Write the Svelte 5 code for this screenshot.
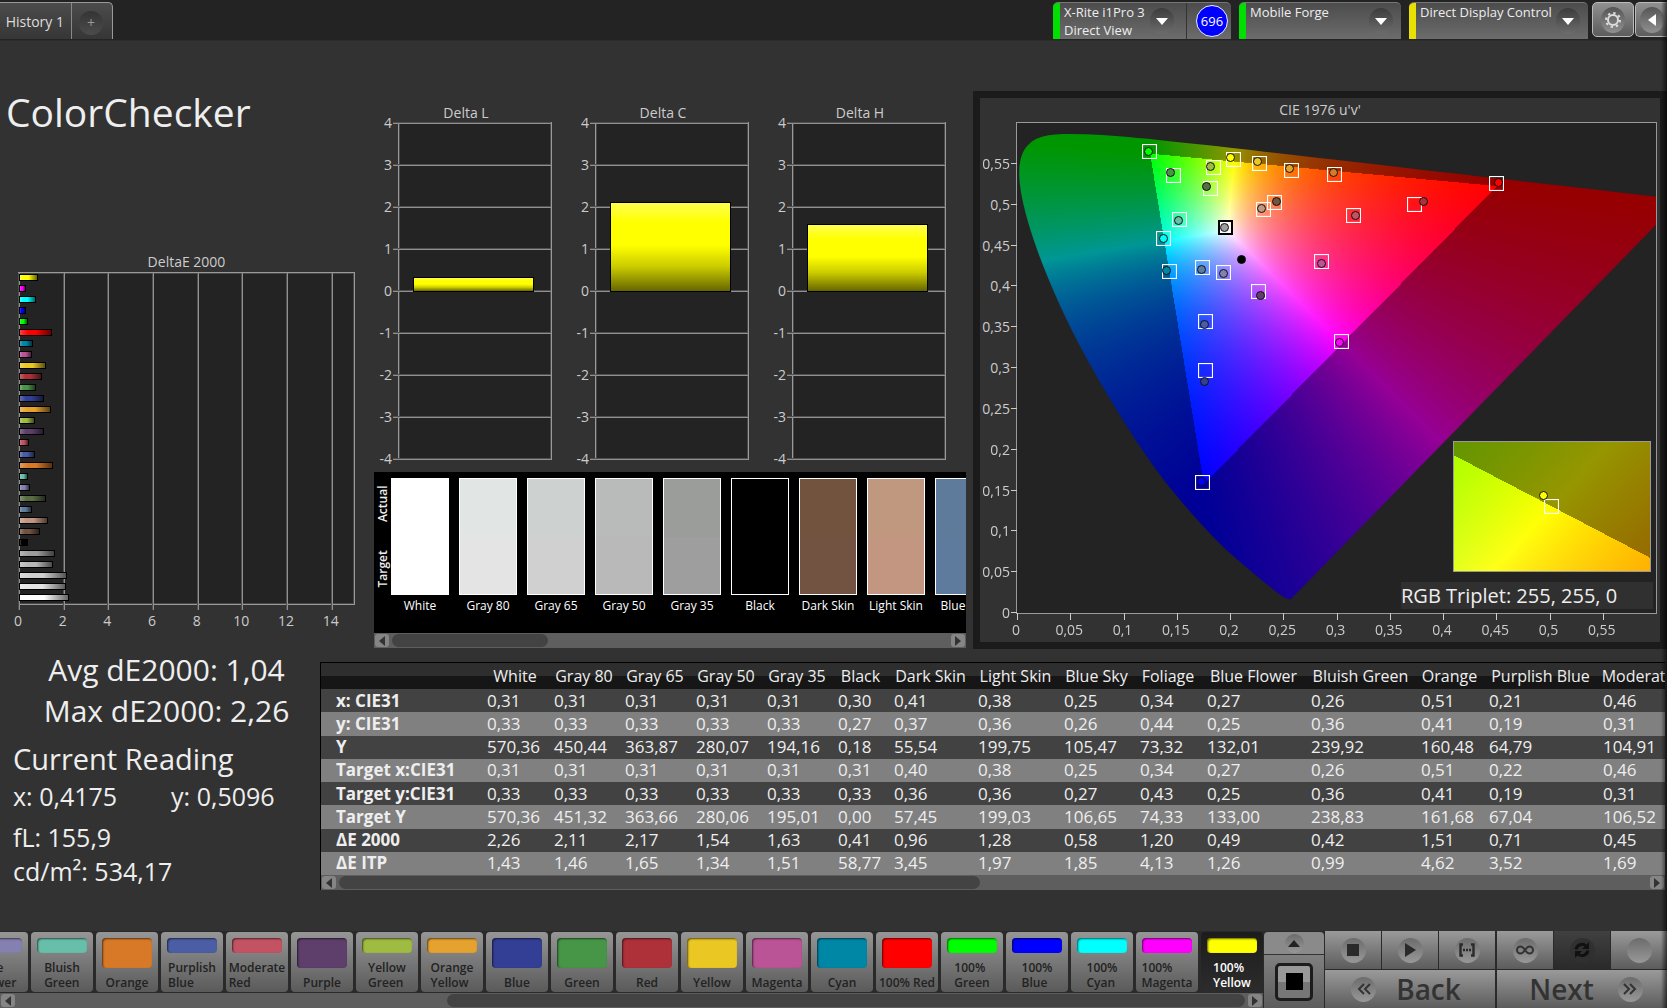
<script lang="ts">
	import { onMount } from 'svelte';

	type Patch = { name: string; color: string; de: number; target?: number[]; actual?: number[] };

	const patches: Patch[] = [
		{ name: '100% Yellow', color: '#ffff00', de: 0.87, target: [0.2034, 0.5548], actual: [0.2009, 0.5569] },
		{ name: '100% Magenta', color: '#ff00ff', de: 0.3, target: [0.3048, 0.3323], actual: [0.3031, 0.3303] },
		{ name: '100% Cyan', color: '#00ffff', de: 0.75, target: [0.1383, 0.4574], actual: [0.1379, 0.4583] },
		{ name: '100% Blue', color: '#0000ff', de: 0.3, target: [0.175, 0.1591], actual: [0.1738, 0.1608] },
		{ name: '100% Green', color: '#00ff00', de: 0.42, target: [0.1245, 0.5646], actual: [0.1241, 0.565] },
		{ name: '100% Red', color: '#ff0000', de: 1.46, target: [0.4505, 0.5251], actual: [0.4526, 0.5267] },
		{ name: 'Cyan', color: '#0087a6', de: 0.61, target: [0.1433, 0.4179], actual: [0.1408, 0.4187] },
		{ name: 'Magenta', color: '#bb5397', de: 0.57, target: [0.2865, 0.4293], actual: [0.2865, 0.4269] },
		{ name: 'Yellow', color: '#eac723', de: 1.19, target: [0.2284, 0.5503], actual: [0.2264, 0.552] },
		{ name: 'Red', color: '#ae3039', de: 1.05, target: [0.3741, 0.5002], actual: [0.382, 0.5035] },
		{ name: 'Green', color: '#479648', de: 0.75, target: [0.147, 0.5353], actual: [0.1446, 0.5385] },
		{ name: 'Blue', color: '#333e95', de: 1.1, target: [0.1779, 0.2961], actual: [0.1767, 0.2834] },
		{ name: 'Orange Yellow', color: '#e6a22f', de: 1.42, target: [0.2585, 0.5418], actual: [0.256, 0.5434] },
		{ name: 'Yellow Green', color: '#9fbb41', de: 0.7, target: [0.1846, 0.5451], actual: [0.1817, 0.5467] },
		{ name: 'Purple', color: '#5e3e6b', de: 1.1, target: [0.2276, 0.3935], actual: [0.2293, 0.3886] },
		{ name: 'Moderate Red', color: '#c35362', de: 0.45, target: [0.3169, 0.4856], actual: [0.3182, 0.4856] },
		{ name: 'Purplish Blue', color: '#4b5ea5', de: 0.71, target: [0.1779, 0.3568], actual: [0.1767, 0.3523] },
		{ name: 'Orange', color: '#d87928', de: 1.51, target: [0.299, 0.5369], actual: [0.2977, 0.5389] },
		{ name: 'Bluish Green', color: '#67bfaa', de: 0.42, target: [0.1533, 0.4807], actual: [0.1521, 0.4799] },
		{ name: 'Blue Flower', color: '#8481b0', de: 0.49, target: [0.1942, 0.4159], actual: [0.1942, 0.4151] },
		{ name: 'Foliage', color: '#596d42', de: 1.2, target: [0.1817, 0.5186], actual: [0.1788, 0.5222] },
		{ name: 'Blue Sky', color: '#5e7c9e', de: 0.58, target: [0.175, 0.422], actual: [0.1733, 0.42] },
		{ name: 'Light Skin', color: '#c29680', de: 1.28, target: [0.2322, 0.4941], actual: [0.2301, 0.4953] },
		{ name: 'Dark Skin', color: '#725240', de: 0.96, target: [0.2426, 0.5015], actual: [0.2439, 0.5035] },
		{ name: 'Black', color: '#000000', de: 0.41 },
		{ name: 'Gray 35', color: '#9e9e9e', de: 1.63 },
		{ name: 'Gray 50', color: '#b9b9b9', de: 1.54 },
		{ name: 'Gray 65', color: '#d0d0d0', de: 2.17 },
		{ name: 'Gray 80', color: '#e4e4e4', de: 2.11 },
		{ name: 'White', color: '#ffffff', de: 2.26 }
	];

	const plotted = patches.filter((p) => p.target && p.actual);
	const stripPatches = patches.slice(0, 20).reverse();

	const deltas = [
		{ title: 'Delta L', value: 0.36 },
		{ title: 'Delta C', value: 2.14 },
		{ title: 'Delta H', value: 1.61 }
	];
	const deltaTicks = [4, 3, 2, 1, 0, -1, -2, -3, -4];
	const deTicks = [0, 2, 4, 6, 8, 10, 12, 14];
	const uTicks = [0, 0.05, 0.1, 0.15, 0.2, 0.25, 0.3, 0.35, 0.4, 0.45, 0.5, 0.55];

	const comparisons = [
		{ name: 'White', actual: '#ffffff', target: '#ffffff' },
		{ name: 'Gray 80', actual: '#e1e5e3', target: '#e4e4e4' },
		{ name: 'Gray 65', actual: '#cdd1cf', target: '#d0d0d0' },
		{ name: 'Gray 50', actual: '#b9bbba', target: '#b9b9b9' },
		{ name: 'Gray 35', actual: '#9b9d9b', target: '#9e9e9e' },
		{ name: 'Black', actual: '#000000', target: '#000000' },
		{ name: 'Dark Skin', actual: '#72533e', target: '#725240' },
		{ name: 'Light Skin', actual: '#c0977f', target: '#c29680' },
		{ name: 'Blue Sky', actual: '#5f7b9b', target: '#5e7a9c' }
	];

	const columns = [
		{ name: 'White', width: 67 },
		{ name: 'Gray 80', width: 71 },
		{ name: 'Gray 65', width: 71 },
		{ name: 'Gray 50', width: 71 },
		{ name: 'Gray 35', width: 71 },
		{ name: 'Black', width: 56 },
		{ name: 'Dark Skin', width: 84 },
		{ name: 'Light Skin', width: 86 },
		{ name: 'Blue Sky', width: 76 },
		{ name: 'Foliage', width: 67 },
		{ name: 'Blue Flower', width: 104 },
		{ name: 'Bluish Green', width: 110 },
		{ name: 'Orange', width: 68 },
		{ name: 'Purplish Blue', width: 114 },
		{ name: 'Moderate Red', width: 114 }
	];

	const rows = [
		{ label: 'x: CIE31', values: '0,31 0,31 0,31 0,31 0,31 0,30 0,41 0,38 0,25 0,34 0,27 0,26 0,51 0,21 0,46' },
		{ label: 'y: CIE31', values: '0,33 0,33 0,33 0,33 0,33 0,27 0,37 0,36 0,26 0,44 0,25 0,36 0,41 0,19 0,31' },
		{ label: 'Y', values: '570,36 450,44 363,87 280,07 194,16 0,18 55,54 199,75 105,47 73,32 132,01 239,92 160,48 64,79 104,91' },
		{ label: 'Target x:CIE31', values: '0,31 0,31 0,31 0,31 0,31 0,31 0,40 0,38 0,25 0,34 0,27 0,26 0,51 0,22 0,46' },
		{ label: 'Target y:CIE31', values: '0,33 0,33 0,33 0,33 0,33 0,33 0,36 0,36 0,27 0,43 0,25 0,36 0,41 0,19 0,31' },
		{ label: 'Target Y', values: '570,36 451,32 363,66 280,06 195,01 0,00 57,45 199,03 106,65 74,33 133,00 238,83 161,68 67,04 106,52' },
		{ label: 'ΔE 2000', values: '2,26 2,11 2,17 1,54 1,63 0,41 0,96 1,28 0,58 1,20 0,49 0,42 1,51 0,71 0,45' },
		{ label: 'ΔE ITP', values: '1,43 1,46 1,65 1,34 1,51 58,77 3,45 1,97 1,85 4,13 1,26 0,99 4,62 3,52 1,69' }
	];

	// spectral locus, CIE 1931 xy
	const locus = [
		[0.1741, 0.005], [0.1714, 0.0051], [0.1644, 0.0109], [0.1566, 0.0177], [0.144, 0.0297],
		[0.1241, 0.0578], [0.1096, 0.0868], [0.0913, 0.1327], [0.0687, 0.2007], [0.0454, 0.295],
		[0.0235, 0.4127], [0.0082, 0.5384], [0.0039, 0.6548], [0.0139, 0.7502], [0.0389, 0.812],
		[0.0743, 0.8338], [0.1142, 0.8262], [0.1547, 0.8059], [0.2296, 0.7543], [0.3016, 0.6923],
		[0.3731, 0.6245], [0.4441, 0.5547], [0.5125, 0.4866], [0.5752, 0.4242], [0.627, 0.3725],
		[0.6915, 0.3083], [0.7347, 0.2653]
	];

	let diagram: HTMLCanvasElement;
	let detail: HTMLCanvasElement;

	const comma = (n: number) => String(n).replace('.', ',');
	const twoLines = (name: string) => name.includes(' ') && name !== '100% Red';

	function toUv([x, y]: number[]) {
		const d = -2 * x + 12 * y + 3;
		return [(4 * x) / d, (9 * y) / d];
	}

	function toXy(u: number, v: number) {
		const d = 6 * u - 16 * v + 12;
		return [(9 * u) / d, (4 * v) / d];
	}

	// colours outside the Rec.709 triangle are drawn darker
	function paint(canvas: HTMLCanvasElement, locate: (fx: number, fy: number) => number[]) {
		const ctx = canvas.getContext('2d')!;
		const { width, height } = canvas;
		const image = ctx.createImageData(width, height);
		for (let j = 0; j < height; j++) {
			for (let i = 0; i < width; i++) {
				const [x, y] = locate((i + 0.5) / width, 1 - (j + 0.5) / height);
				const z = 1 - x - y;
				const rgb = [
					3.2406 * x - 1.5372 * y - 0.4986 * z,
					-0.9689 * x + 1.8758 * y + 0.0415 * z,
					0.0557 * x - 0.204 * y + 1.057 * z
				];
				const peak = Math.max(...rgb);
				const shade = Math.min(...rgb) < 0 ? 150 : 255;
				const at = (j * width + i) * 4;
				rgb.forEach((c, k) => {
					image.data[at + k] = (shade * Math.max(c, 0)) / peak;
				});
				image.data[at + 3] = 255;
			}
		}
		ctx.putImageData(image, 0, 0);
		return ctx;
	}

	onMount(() => {
		const ctx = paint(diagram, (fx, fy) => toXy(fx * 0.6, fy * 0.6));
		ctx.globalCompositeOperation = 'destination-in';
		ctx.beginPath();
		const pts = locus.map((p) => {
			const [u, v] = toUv(p);
			return [(u / 0.6) * diagram.width, (1 - v / 0.6) * diagram.height];
		});
		ctx.moveTo(pts[0][0], pts[0][1]);
		for (let i = 1; i < pts.length - 1; i++) {
			const [x, y] = pts[i];
			const [nx, ny] = pts[i + 1];
			ctx.quadraticCurveTo(x, y, (x + nx) / 2, (y + ny) / 2);
		}
		const last = pts[pts.length - 1];
		ctx.lineTo(last[0], last[1]);
		ctx.closePath();
		ctx.fill();

		paint(detail, (fx, fy) => [0.4193 + (fx - 0.5) * 0.055, 0.5053 + (fy - 0.5) * 0.055]);
	});
</script>

{#snippet scrollbar(label: string, start: number, size: number)}
	<div class="scrollbar">
		<button class="scroll-btn" aria-label="{label} left">
			<svg width="8" height="10" viewBox="0 0 8 10"><path d="M7 0v10L1 5z" /></svg>
		</button>
		<div class="track"><div class="thumb" style="margin-left: {start}%; width: {size}%"></div></div>
		<button class="scroll-btn" aria-label="{label} right">
			<svg width="8" height="10" viewBox="0 0 8 10"><path d="M1 0v10l6-5z" /></svg>
		</button>
	</div>
{/snippet}

{#snippet chevron()}
	<span class="knob">
		<svg width="14" height="8" viewBox="0 0 14 8"><path d="M1 1h12L7 8z" fill="#fff" /></svg>
	</span>
{/snippet}

<div class="app">
	<header class="topbar">
		<nav class="tabs">
			<button class="tab">History 1</button>
			<button class="tab add" aria-label="Add tab"><span class="plus">+</span></button>
		</nav>
		<div class="devices">
			<div class="device meter">
				<button class="device-btn"><span>X-Rite i1Pro 3<br />Direct View</span>{@render chevron()}</button>
				<button class="count"><span>696</span></button>
			</div>
			<div class="device source">
				<button class="device-btn"><span>Mobile Forge</span>{@render chevron()}</button>
			</div>
			<div class="device display">
				<button class="device-btn yellow"><span>Direct Display Control</span>{@render chevron()}</button>
			</div>
			<button class="square-btn" aria-label="Settings">
				<span class="knob light">
					<svg width="18" height="18" viewBox="0 0 18 18" fill="none" stroke="#ddd">
						<circle cx="9" cy="9" r="5" stroke-width="2" />
						<circle cx="9" cy="9" r="7" stroke-width="2" stroke-dasharray="2.4 3.1" />
					</svg>
				</span>
			</button>
			<button class="square-btn last" aria-label="Collapse">
				<span class="knob light">
					<svg width="8" height="12" viewBox="0 0 8 12"><path d="M8 0v12L0 6z" fill="#fff" /></svg>
				</span>
			</button>
		</div>
	</header>

	<main>
		<div class="charts">
			<section class="overview">
				<h1>ColorChecker</h1>
				<div class="de-chart">
					<h2>DeltaE 2000</h2>
					<div class="de-plot">
						{#each deTicks as t}
							<span class="vline" style="left: {(t / 15) * 100}%"></span>
							<span class="xlabel" style="left: {(t / 15) * 100}%">{t}</span>
						{/each}
						<div class="de-bars">
							{#each patches as p}
								<div class="de-bar" style="width: {(p.de / 15) * 100}%; background-color: {p.color}"></div>
							{/each}
						</div>
					</div>
				</div>
			</section>

			<section class="middle">
				<div class="deltas">
					{#each deltas as d}
						<div class="delta">
							<h2>{d.title}</h2>
							<div class="delta-plot">
								{#each deltaTicks as t}
									<span class="hline" style="top: {((4 - t) / 8) * 100}%"></span>
									<span class="ylabel" style="top: {((4 - t) / 8) * 100}%">{t}</span>
								{/each}
								<div class="delta-bar" style="height: {(d.value / 8) * 100}%"></div>
							</div>
						</div>
					{/each}
				</div>

				<div class="compare">
					<div class="compare-body">
						<div class="compare-axis"><span>Target</span><span>Actual</span></div>
						{#each comparisons as c}
							<figure>
								<div class="chip">
									<div style="background: {c.actual}"></div>
									<div style="background: {c.target}"></div>
								</div>
								<figcaption>{c.name}</figcaption>
							</figure>
						{/each}
					</div>
					{@render scrollbar('Scroll swatches', 0, 28)}
				</div>
			</section>

			<section class="cie">
				<h2>CIE 1976 u'v'</h2>
				<div class="cie-plot">
					<canvas bind:this={diagram} width="639" height="491"></canvas>
					{#each uTicks as t}
						<span class="xtick" style="left: {(t / 0.6) * 100}%"></span>
						<span class="xlabel" style="left: {(t / 0.6) * 100}%">{comma(t)}</span>
						<span class="ytick" style="bottom: {(t / 0.6) * 100}%"></span>
						<span class="ylabel" style="top: {100 - (t / 0.6) * 100}%">{comma(t)}</span>
					{/each}
					{#each plotted as p}
						<span class="target" style="left: {(p.target[0] / 0.6) * 100}%; bottom: {(p.target[1] / 0.6) * 100}%"></span>
						<span
							class="dot"
							style="left: {(p.actual[0] / 0.6) * 100}%; bottom: {(p.actual[1] / 0.6) * 100}%; background: {p.color}"
						></span>
					{/each}
					<span class="target neutral" style="left: {(0.1967 / 0.6) * 100}%; bottom: {(0.4709 / 0.6) * 100}%"></span>
					<span class="dot" style="left: {(0.1955 / 0.6) * 100}%; bottom: {(0.4717 / 0.6) * 100}%; background: #9e9e9e"></span>
					<span class="dot" style="left: {(0.2109 / 0.6) * 100}%; bottom: {(0.4322 / 0.6) * 100}%; background: #000"></span>

					<div class="detail">
						<div class="detail-plot">
							<canvas bind:this={detail} width="196" height="129"></canvas>
							<span class="target" style="left: 50%; bottom: 50%"></span>
							<span class="dot" style="left: 46%; bottom: 58%; background: #ff0"></span>
						</div>
						<p>RGB Triplet: 255, 255, 0</p>
					</div>
				</div>
			</section>
		</div>

		<div class="results">
			<section class="stats">
				<p class="big">Avg dE2000: 1,04</p>
				<p class="big">Max dE2000: 2,26</p>
				<h3>Current Reading</h3>
				<div class="reading"><span>x: 0,4175</span><span>y: 0,5096</span></div>
				<p class="lum">fL: 155,9</p>
				<p class="lum">cd/m²: 534,17</p>
			</section>

			<section class="table-panel">
				<div class="table-view">
					<table>
						<colgroup>
							<col class="label-col" />
							{#each columns as c}<col style="width: {c.width}px" />{/each}
						</colgroup>
						<thead>
							<tr>
								<td></td>
								{#each columns as c}<th scope="col">{c.name}</th>{/each}
							</tr>
						</thead>
						<tbody>
							{#each rows as r}
								<tr>
									<th scope="row">{r.label}</th>
									{#each r.values.split(' ') as v}<td>{v}</td>{/each}
								</tr>
							{/each}
						</tbody>
					</table>
				</div>
				{@render scrollbar('Scroll table', 0, 49)}
			</section>
		</div>
	</main>

	<footer>
		<div class="strip">
			<div class="strip-view">
				{#each stripPatches as p}
					<button class="patch" class:active={p.name === '100% Yellow'}>
						<span class="patch-color" class:short={twoLines(p.name)} style="background: {p.color}"></span>
						<span class="patch-name">
							{#if twoLines(p.name)}
								{p.name.slice(0, p.name.indexOf(' '))}<br />{p.name.slice(p.name.indexOf(' ') + 1)}
							{:else}
								{p.name}
							{/if}
						</span>
					</button>
				{/each}
			</div>
			{@render scrollbar('Scroll patches', 35, 65)}
		</div>

		<div class="pattern">
			<button class="pattern-up" aria-label="Expand">
				<span class="round small"><svg width="12" height="7" viewBox="0 0 12 7"><path d="M6 0l6 7H0z" fill="#222" /></svg></span>
			</button>
			<button class="pattern-window" aria-label="Pattern window"><span><i></i></span></button>
		</div>

		<div class="controls">
			<div class="transport">
				<button aria-label="Stop"><span class="round"><svg width="12" height="12" viewBox="0 0 12 12"><path d="M0 0h12v12H0z" fill="#2a2a2a" /></svg></span></button>
				<button aria-label="Play"><span class="round"><svg width="12" height="14" viewBox="0 0 12 14"><path d="M1 0l11 7-11 7z" fill="#2a2a2a" /></svg></span></button>
				<button aria-label="Read series" class="group-end">
					<span class="round">
						<svg width="18" height="14" viewBox="0 0 18 14" fill="none" stroke="#2a2a2a" stroke-width="2.400">
							<path d="M5 1.500H2.500v11H5M13 1.500h2.500v11H13" />
							<path d="M5 7h8" stroke-dasharray="2 1" />
						</svg>
					</span>
				</button>
				<button aria-label="Continuous">
					<span class="round">
						<svg width="18" height="10" viewBox="0 0 18 10" fill="none" stroke="#333" stroke-width="2">
							<path d="M9 5C7 2 6 1.500 4.500 1.500a3.500 3.500 0 0 0 0 7C6 8.500 7 8 9 5s3-3.500 4.500-3.500a3.500 3.500 0 0 1 0 7C12 8.500 11 8 9 5z" />
						</svg>
					</span>
				</button>
				<button aria-label="Repeat" class="pressed">
					<span class="round">
						<svg width="16" height="16" viewBox="0 0 16 16" fill="none" stroke="#111" stroke-width="3">
							<path d="M2 7.500a6 6 0 0 1 10-3.500M14 8.500a6 6 0 0 1-10 3.500" />
							<path d="M15 0v7H8zM1 16V9h7z" fill="#111" stroke="none" />
						</svg>
					</span>
				</button>
				<button aria-label="Record"><span class="round"></span></button>
			</div>
			<div class="paging">
				<button class="back">
					<span class="round"><svg width="14" height="12" viewBox="0 0 14 12" fill="none" stroke="#333" stroke-width="2"><path d="M7 1L2 6l5 5M13 1L8 6l5 5" /></svg></span>
					Back
				</button>
				<button class="next">
					Next
					<span class="round"><svg width="14" height="12" viewBox="0 0 14 12" fill="none" stroke="#333" stroke-width="2"><path d="M1 1l5 5-5 5M7 1l5 5-5 5" /></svg></span>
				</button>
			</div>
		</div>
	</footer>
</div>

<style>
	:global(body) {
		margin: 0;
		background: #323232;
	}

	.app {
		position: relative;
		display: flex;
		flex-direction: column;
		min-height: 100vh;
		overflow: hidden;
		background: #323232;
		color: #eee;
		font-family: 'Open Sans', 'Noto Sans', sans-serif;
		font-size: 13px;
	}

	/* soft shadow along the right window edge */
	.app::after {
		content: '';
		position: absolute;
		top: 0;
		right: 0;
		bottom: 0;
		width: 6px;
		background: linear-gradient(90deg, transparent, rgba(0, 0, 0, 0.6));
		pointer-events: none;
	}

	.app :global(*) {
		box-sizing: border-box;
	}

	h1, h2, h3, p, figure {
		margin: 0;
		font-weight: 400;
	}

	button {
		margin: 0;
		padding: 0;
		border: 0;
		background: none;
		color: inherit;
		font: inherit;
		cursor: pointer;
	}

	svg {
		display: block;
	}

	/* top bar */
	.topbar {
		display: flex;
		justify-content: space-between;
		height: 41px;
		padding-top: 2px;
		background: #232323;
		border-bottom: 1px solid #2b2b2b;
	}

	.tabs {
		display: flex;
		height: 37px;
		border: 1px solid #999;
		border-width: 1px 1px 0 0;
		border-radius: 0 5px 0 0;
		background: linear-gradient(#4c4c4c, #363636);
	}

	.tab {
		width: 72px;
		padding-right: 7px;
		border-right: 1px solid #888;
		font-size: 14px;
		text-align: right;
		color: #ddd;
	}

	.tab.add {
		display: flex;
		align-items: center;
		justify-content: center;
		width: 40px;
		padding: 4px 2px 0 0;
		border: 0;
	}

	.plus {
		width: 24px;
		height: 24px;
		border-radius: 50%;
		background: linear-gradient(#343434, #4c4c4c);
		color: #999;
		line-height: 24px;
		text-align: center;
	}

	.devices {
		display: flex;
		align-items: flex-start;
		font-size: 13px;
	}

	.device {
		display: flex;
		height: 37px;
		margin-right: 8px;
		border-top: 1px solid #777;
		border-radius: 5px 5px 0 0;
		background: linear-gradient(#4c4c4c, #6c6c6c);
		overflow: hidden;
	}

	.device-btn {
		display: flex;
		flex: 1;
		align-items: flex-start;
		justify-content: space-between;
		padding: 0 8px 0 4px;
		border-left: 7px solid #00e000;
		line-height: 18px;
		text-align: left;
		white-space: nowrap;
	}

	.device-btn.yellow {
		border-left-color: #e8e000;
	}

	.meter {
		width: 178px;
	}

	.meter .device-btn {
		padding-right: 12px;
	}

	.source {
		width: 162px;
	}

	.display {
		width: 179px;
		margin-right: 4px;
	}

	.knob {
		display: flex;
		align-items: center;
		justify-content: center;
		width: 24px;
		height: 26px;
		margin-top: 5px;
		border-radius: 50%;
		background: linear-gradient(#3c3c3c, #6c6c6c);
	}

	.count {
		width: 45px;
		padding-left: 9px;
		border-left: 1px solid #333;
	}

	.count span {
		display: block;
		width: 32px;
		height: 32px;
		border: 1px solid #eef;
		border-radius: 50%;
		background: #00f;
		line-height: 30px;
		text-align: center;
		color: #fff;
	}

	.square-btn {
		display: flex;
		align-items: center;
		justify-content: center;
		width: 42px;
		height: 35px;
		margin-right: 1px;
		border: 1px solid #bbb;
		border-radius: 5px;
		background: linear-gradient(#909090, #5c5c5c);
	}

	.square-btn.last {
		width: 32px;
		margin-right: 0;
		border-right: 0;
		border-radius: 5px 0 0 5px;
	}

	.knob.light {
		margin: 0;
		background: linear-gradient(#555, #909090);
	}

	/* charts */
	main {
		flex: 1;
		padding-bottom: 12px;
	}

	.charts {
		display: grid;
		grid-template-columns: minmax(0, 374fr) minmax(0, 599fr) minmax(0, 694fr);
		padding-top: 50px;
	}

	h2 {
		font-size: 14px;
		line-height: 20px;
		text-align: center;
		color: #ccc;
	}

	.overview {
		display: flex;
		flex-direction: column;
		justify-content: space-between;
		padding: 0 19px 17px 18px;
	}

	h1 {
		margin-left: -12px;
		font-size: 39px;
		line-height: 42px;
	}

	.de-plot {
		position: relative;
		height: 333px;
		margin-bottom: 27px;
		border: 1px solid #999;
		background: #232323;
		box-shadow: inset 0 0 0 1px #484848;
	}

	.vline {
		position: absolute;
		top: 0;
		bottom: -6px;
		width: 1px;
		background: #909090;
		box-shadow: -1px 0 #505050;
	}

	.xlabel {
		position: absolute;
		top: 100%;
		width: 40px;
		margin: 7px 0 0 -21px;
		font-size: 14px;
		line-height: 20px;
		text-align: center;
		color: #ccc;
	}

	.de-bars {
		position: relative;
		display: flex;
		flex-direction: column;
		justify-content: space-between;
		height: 100%;
		padding: 1px 0 3px;
	}

	.de-bar {
		height: 7px;
		border: 1px solid #000;
		background-image: linear-gradient(90deg, rgba(255, 255, 255, 0.25), transparent 25%, transparent 50%, rgba(0, 0, 0, 0.6));
	}

	.middle {
		display: flex;
		flex-direction: column;
		gap: 12px;
		padding-right: 7px;
		padding-top: 13px;
	}

	.deltas {
		display: flex;
		gap: 13px;
		padding-right: 14px;
	}

	.delta {
		flex: 1;
	}

	.delta h2 {
		line-height: 18px;
	}

	.delta-plot {
		position: relative;
		height: 338px;
		margin: 0 6px 0 24px;
		border: 1px solid #999;
		background: #232323;
		box-shadow: inset 0 0 0 1px #484848;
	}

	.hline {
		position: absolute;
		left: -6px;
		right: 0;
		height: 1px;
		background: #909090;
		box-shadow: 0 -1px #505050;
	}

	.ylabel {
		position: absolute;
		right: 100%;
		margin: -10px 7px 0 0;
		font-size: 14px;
		line-height: 20px;
		color: #ccc;
	}

	.delta-bar {
		position: absolute;
		bottom: calc(50% - 1px);
		left: 9%;
		right: 11%;
		border: 1px solid #000;
		background: linear-gradient(#ffff50, #ff0 22%, #ff0 48%, #cc0 72%, #660);
	}

	.compare {
		background: #000;
	}

	.compare-body {
		display: flex;
		gap: 10px;
		height: 161px;
		padding-top: 6px;
		overflow: hidden;
	}

	.compare-axis {
		display: flex;
		flex: none;
		justify-content: space-between;
		width: 102px;
		height: 17px;
		margin: 50px -52px 50px -43px;
		font-size: 12px;
		font-weight: 600;
		line-height: 17px;
		transform: rotate(-90deg);
	}

	figure {
		display: flex;
		flex: none;
		flex-direction: column;
		align-items: center;
		width: 58px;
	}

	.chip {
		display: flex;
		flex-direction: column;
		width: 100%;
		height: 117px;
		border: 1px solid #fff;
	}

	.chip div {
		flex: 1;
	}

	figcaption {
		font-size: 12px;
		line-height: 22px;
		white-space: nowrap;
		color: #fff;
	}

	/* scrollbars */
	.scrollbar {
		display: flex;
		align-items: center;
		height: 15px;
		padding: 0 1px;
		background: #5e5e5e;
	}

	.scroll-btn {
		display: flex;
		flex: none;
		align-items: center;
		justify-content: center;
		width: 14px;
		height: 13px;
		border-radius: 3px;
		background: #858585;
		fill: #333;
	}

	.track {
		flex: 1;
		padding: 0 3px;
	}

	.thumb {
		height: 13px;
		border-radius: 7px;
		background: #434343;
	}

	/* chromaticity diagram */
	.cie {
		padding-bottom: 28px;
		border: 7px solid #1b1b1b;
	}

	.cie h2 {
		line-height: 24px;
	}

	.cie-plot {
		position: relative;
		height: 492px;
		margin: 0 3px 0 36px;
		border: 1px solid #999;
		background: #232323;
	}

	canvas {
		display: block;
		width: 100%;
		height: 100%;
	}

	.xtick {
		position: absolute;
		top: 100%;
		width: 1px;
		height: 7px;
		background: #ccc;
	}

	.ytick {
		position: absolute;
		right: 100%;
		width: 6px;
		height: 1px;
		background: #ccc;
	}

	.target {
		position: absolute;
		width: 15px;
		height: 15px;
		margin: 0 0 -7px -8px;
		border: 1px solid #fff;
		box-shadow: inset 0 0 1px #fff;
	}

	.target.neutral {
		border: 2px solid #000;
		box-shadow: inset 0 0 0 1px #fff;
	}

	.dot {
		position: absolute;
		width: 9px;
		height: 9px;
		margin: 0 0 -4px -5px;
		border: 1px solid #111;
		border-radius: 50%;
	}

	.detail {
		position: absolute;
		right: 3px;
		bottom: 4px;
		width: 252px;
	}

	.detail-plot {
		position: relative;
		width: 198px;
		height: 131px;
		margin: 0 2px 10px auto;
		border: 1px solid #999;
	}

	.detail p {
		background: #303030;
		font-size: 20px;
		line-height: 27px;
	}

	/* readings and table */
	.results {
		display: flex;
		align-items: flex-start;
	}

	.stats {
		flex: none;
		width: 320px;
		padding-left: 13px;
		white-space: nowrap;
	}

	.big {
		width: 307px;
		font-size: 30px;
		line-height: 41px;
		text-align: center;
	}

	h3 {
		margin-top: 8px;
		font-size: 29px;
		line-height: 40px;
	}

	.reading {
		display: flex;
		gap: 54px;
		font-size: 25px;
		line-height: 34px;
	}

	.lum {
		padding-top: 7px;
		font-size: 25px;
		line-height: 34px;
	}

	.lum + .lum {
		padding-top: 0;
	}

	.table-panel {
		flex: 1;
		min-width: 0;
		margin: 13px 2px 0 0;
		border: 1px solid #000;
		border-width: 1px 0 0 1px;
	}

	.table-view {
		overflow: hidden;
	}

	table {
		width: 100%;
		height: 212px;
		border-collapse: collapse;
		table-layout: fixed;
		font-size: 17px;
		line-height: 20px;
		white-space: nowrap;
	}

	.label-col {
		width: 163px;
	}

	td, th {
		padding: 0 0 0 3px;
		font-weight: 400;
		text-align: left;
	}

	thead {
		height: 26px;
		background: linear-gradient(#2e2e2e 50%, #161616 50%);
	}

	thead th {
		padding: 0 5px 0 0;
		font-size: 16px;
		text-align: center;
	}

	tbody tr {
		background: #424242;
	}

	tbody tr:nth-child(even) {
		background: #808080;
	}

	tbody th {
		padding-left: 15px;
		font-weight: 700;
	}

	/* bottom bar */
	footer {
		display: flex;
		height: 77px;
		background: #2a2a2a;
	}

	.strip {
		display: flex;
		flex: 1;
		flex-direction: column;
		justify-content: space-between;
		min-width: 0;
	}

	.strip-view {
		display: flex;
		justify-content: flex-end;
		gap: 3px;
		padding-top: 1px;
		overflow: hidden;
	}

	.patch {
		display: flex;
		flex: none;
		flex-direction: column;
		align-items: center;
		justify-content: space-between;
		width: 62px;
		height: 60px;
		padding: 6px 0 2px;
		border-radius: 4px;
		background: linear-gradient(#969696, #5a5a5a);
		color: #222;
	}

	.patch.active {
		background: linear-gradient(#1c1c1c, #2c2c2c);
		color: #fff;
	}

	.patch-color {
		width: 50px;
		height: 30px;
		border-radius: 4px;
		box-shadow: inset 1px 1px 2px rgba(0, 0, 0, 0.6);
	}

	.patch-color.short {
		height: 15px;
	}

	.patch-name {
		font-size: 12px;
		font-weight: 600;
		line-height: 15px;
		text-align: left;
		white-space: nowrap;
	}

	.pattern {
		display: flex;
		flex-direction: column;
		width: 60px;
		margin: 1px 1px 0;
	}

	.pattern button {
		display: flex;
		align-items: center;
		justify-content: center;
	}

	.pattern-up {
		height: 23px;
		border-bottom: 1px solid #333;
		border-radius: 4px 4px 0 0;
		background: #8a8a8a;
	}

	.pattern-window {
		flex: 1;
		background: linear-gradient(#808080, #5c5c5c);
	}

	.pattern-window span {
		display: flex;
		align-items: center;
		justify-content: center;
		width: 38px;
		height: 38px;
		border: 3px solid #1c1c1c;
		border-radius: 5px;
		background: linear-gradient(#999 50%, #777 50%);
	}

	.pattern-window i {
		width: 17px;
		height: 17px;
		background: #000;
	}

	.round {
		display: flex;
		align-items: center;
		justify-content: center;
		width: 25px;
		height: 25px;
		border-radius: 50%;
		background: linear-gradient(#6c6c6c, #989898);
	}

	.round.small {
		width: 19px;
		height: 19px;
	}

	.controls {
		display: flex;
		flex-direction: column;
		gap: 1px;
		width: 342px;
	}

	.transport, .paging {
		display: flex;
		flex: 1;
		gap: 1px;
	}

	.controls button {
		display: flex;
		flex: 1;
		align-items: center;
		justify-content: center;
		background: linear-gradient(#9a9a9a, #5c5c5c);
	}

	.transport .group-end {
		margin-right: 1px;
	}

	.controls .pressed {
		background: linear-gradient(#404040, #2a2a2a);
	}

	.pressed .round {
		background: #303030;
	}

	.paging {
		gap: 2px;
	}

	.paging button {
		gap: 20px;
		font-size: 28px;
		font-weight: 600;
		line-height: 36px;
		color: #333;
	}

	.paging .back {
		padding-right: 8px;
	}

	.paging .next {
		gap: 24px;
		padding-left: 8px;
	}
</style>
